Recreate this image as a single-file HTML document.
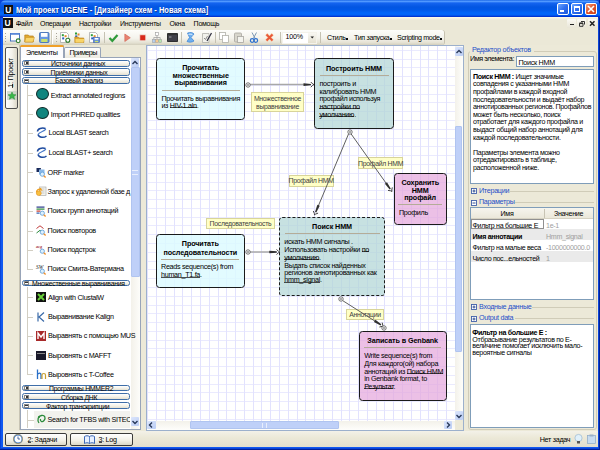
<!DOCTYPE html>
<html><head><meta charset="utf-8"><style>
*{box-sizing:border-box;margin:0;padding:0}
html,body{width:600px;height:450px;overflow:hidden;background:#00209A}
body{position:relative;font-family:"Liberation Sans",sans-serif;color:#000}
.a{position:absolute}
.t{position:absolute;white-space:nowrap;line-height:1}
u{text-decoration:none;background:linear-gradient(#222,#222) 0 calc(100% - 1.9px)/100% 0.8px no-repeat}
svg{position:absolute;overflow:visible}
</style></head><body>
<div class="a" style="left:0;top:0;width:600px;height:450px;background:#00209A"></div>
<div class="a" style="left:0;top:0;width:599px;height:449px;background:#0A44D8"></div>
<div class="a" style="left:1px;top:17px;width:597px;height:431px;background:#1058F0"></div>
<div class="a" style="left:0;top:0;width:600px;height:18px;border-radius:6px 6px 0 0;background:linear-gradient(#1E6AE8 0,#5098FF 1.5px,#1464F0 3px,#0256E2 7px,#0058E8 10px,#0066FA 13px,#0062F6 15px,#0034D2 16.5px,#0030C8 18px)"></div>
<div class="a" style="left:3px;top:17px;width:595px;height:430px;background:#ECE9D8"></div>
<div class="a" style="left:4px;top:5px;width:9px;height:9px;background:#111"></div>
<div class="t" style="left:5.3px;top:5.6px;color:#fff;font-weight:bold;font-size:8.4px">U</div>
<div class="t" style="left:16px;top:5.6px;color:#fff;font-weight:bold;font-size:8.8px;letter-spacing:0px;transform:scaleX(0.853);transform-origin:0 0;text-shadow:0.7px 0.7px 0 #0A2A90">Мой проект UGENE - [Дизайнер схем - Новая схема]</div>
<div class="a" style="left:557px;top:3px;width:12px;height:12px;border:1px solid #fff;border-radius:2px;background:linear-gradient(135deg,#70A8FF,#2F6FF0 50%,#1E58D8)"></div>
<div class="a" style="left:571px;top:3px;width:12px;height:12px;border:1px solid #fff;border-radius:2px;background:linear-gradient(135deg,#70A8FF,#2F6FF0 50%,#1E58D8)"></div>
<div class="a" style="left:560px;top:10px;width:4px;height:2px;background:#fff"></div>
<div class="a" style="left:574px;top:6px;width:6px;height:6px;border:1px solid #fff;border-top-width:2px"></div>
<div class="a" style="left:585px;top:3px;width:12px;height:12px;border:1px solid #fff;border-radius:2px;background:linear-gradient(135deg,#F4A080,#E0542A 50%,#C8401C)"></div>
<svg style="left:585px;top:3px" width="12" height="12"><path d="M3 3L9 9M9 3L3 9" stroke="#fff" stroke-width="1.6"/></svg>
<div class="a" style="left:3px;top:17px;width:595px;height:12px;background:linear-gradient(#FFFDE6 0,#F4F2E4 1.2px,#EBE8D7 3px,#EBE8D7)"></div>
<div class="a" style="left:3px;top:18px;width:10px;height:10px;background:#111"></div>
<div class="t" style="left:4.5px;top:18.8px;color:#fff;font-weight:bold;font-size:8.5px">U</div>
<div class="t" style="left:16.0px;top:19.7px;font-size:7.0px;letter-spacing:-0.25px;font-weight:normal;color:#000;"><u>Ф</u>айл</div>
<div class="t" style="left:40.0px;top:19.7px;font-size:7.0px;letter-spacing:-0.25px;font-weight:normal;color:#000;">Операции</div>
<div class="t" style="left:79.0px;top:19.7px;font-size:7.0px;letter-spacing:-0.25px;font-weight:normal;color:#000;">Настройки</div>
<div class="t" style="left:120.0px;top:19.7px;font-size:7.0px;letter-spacing:-0.25px;font-weight:normal;color:#000;">Инструменты</div>
<div class="t" style="left:169.6px;top:19.7px;font-size:7.0px;letter-spacing:-0.25px;font-weight:normal;color:#000;">Окна</div>
<div class="t" style="left:193.6px;top:19.7px;font-size:7.0px;letter-spacing:-0.25px;font-weight:normal;color:#000;">Помощь</div>
<div class="a" style="left:567px;top:19px;width:8.5px;height:8.7px;background:linear-gradient(#FBFAF5,#E8E5D6);border-radius:1px"></div>
<div class="a" style="left:577.3px;top:19px;width:8.5px;height:8.7px;background:linear-gradient(#FBFAF5,#E8E5D6);border-radius:1px"></div>
<div class="a" style="left:588px;top:19px;width:8.5px;height:8.7px;background:linear-gradient(#FBFAF5,#E8E5D6);border-radius:1px"></div>
<div class="a" style="left:569.5px;top:23.5px;width:4px;height:1.6px;background:#222"></div>
<svg style="left:578px;top:19px" width="8" height="9"><path d="M3 2.5h3.5v3M1.5 4.3h3.5v3h-3.5z" stroke="#333" fill="none" stroke-width="1"/><path d="M1.5 4.3h3.5" stroke="#333" stroke-width="1.6"/></svg>
<svg style="left:588px;top:19px" width="8.5" height="9"><path d="M2 2.3L6.5 6.8M6.5 2.3L2 6.8" stroke="#222" stroke-width="1.5"/></svg>
<div class="a" style="left:3px;top:29px;width:595px;height:16px;background:#EBE8D7"></div>
<div class="a" style="left:3px;top:29.5px;width:441px;height:15px;border-radius:0 3px 3px 0;background:linear-gradient(#FDFDFA,#F4F3EC 55%,#E4E1D2 85%,#D2CEBC);box-shadow:1px 0 0 #C6C2B0"></div>
<div class="a" style="left:5px;top:33px;width:1px;height:1px;background:#A8A498"></div>
<div class="a" style="left:5px;top:35.5px;width:1px;height:1px;background:#A8A498"></div>
<div class="a" style="left:5px;top:38px;width:1px;height:1px;background:#A8A498"></div>
<div class="a" style="left:5px;top:40.5px;width:1px;height:1px;background:#A8A498"></div>
<div class="a" style="left:55.5px;top:33px;width:1px;height:1px;background:#A8A498"></div>
<div class="a" style="left:55.5px;top:35.5px;width:1px;height:1px;background:#A8A498"></div>
<div class="a" style="left:55.5px;top:38px;width:1px;height:1px;background:#A8A498"></div>
<div class="a" style="left:55.5px;top:40.5px;width:1px;height:1px;background:#A8A498"></div>
<div class="a" style="left:51px;top:30px;width:1px;height:14px;background:#D0CCBA"></div>
<div class="a" style="left:52px;top:30px;width:1px;height:14px;background:#FFFFFF"></div>
<div class="a" style="left:104px;top:32px;width:1px;height:11px;background:#C5C2B2"></div>
<div class="a" style="left:181px;top:32px;width:1px;height:11px;background:#C5C2B2"></div>
<div class="a" style="left:215px;top:32px;width:1px;height:11px;background:#C5C2B2"></div>
<div class="a" style="left:280px;top:32px;width:1px;height:11px;background:#C5C2B2"></div>
<div class="a" style="left:320px;top:32px;width:1px;height:11px;background:#C5C2B2"></div>
<svg style="left:10px;top:32px" width="11" height="11"><rect x="0.5" y="1.5" width="9" height="7.5" fill="#fff" stroke="#3A68B8" stroke-width="0.9"/><rect x="0.5" y="1" width="9" height="1.8" fill="#5A88D8"/><circle cx="8.2" cy="8.8" r="1.9" fill="#fff" stroke="#2A7A2A" stroke-width="1.1"/></svg>
<svg style="left:24px;top:32px" width="11" height="11"><path d="M0.8 3h3.5l1 1h4v6h-8.5z" fill="#E0A830" stroke="#B88018" stroke-width="0.7"/><path d="M1.8 5.5h8.7l-1.6 4.5h-8.1z" fill="#F8D468" stroke="#C89020" stroke-width="0.5"/></svg>
<svg style="left:39px;top:32px" width="11" height="11"><rect x="0.5" y="0.5" width="9.5" height="10" rx="1" fill="#6A98E0" stroke="#3A68B0" stroke-width="0.8"/><rect x="2" y="1" width="6.5" height="3.8" fill="#fff"/><rect x="2.2" y="7" width="6.2" height="3" fill="#C8E070"/></svg>
<svg style="left:60px;top:32px" width="11" height="11"><path d="M0.5 0.5h6l2 2v8h-8z" fill="#fff" stroke="#A0A0A0" stroke-width="0.7"/><rect x="1.8" y="2.2" width="2" height="2" fill="#2A9A3A"/><rect x="4.6" y="3.2" width="2" height="2" fill="#E08A2A"/><rect x="2.2" y="5.4" width="2" height="2" fill="#2A5AC0"/><circle cx="7.8" cy="8.2" r="2" fill="#fff" stroke="#2A7A2A" stroke-width="1.1"/></svg>
<svg style="left:74px;top:32px" width="11" height="11"><rect x="1" y="0.5" width="2" height="2" fill="#2A9A3A"/><rect x="3.5" y="1.5" width="2" height="2" fill="#E08A2A"/><rect x="1.2" y="3.4" width="2" height="2" fill="#2A5AC0"/><path d="M0.8 5h3.5l1 1h4.5v4.5h-9z" fill="#E0A830" stroke="#B88018" stroke-width="0.6"/><path d="M1.5 7h9l-1.3 3.5h-7.7z" fill="#F8D468"/></svg>
<svg style="left:89px;top:32px" width="11" height="11"><path d="M0.5 0.5h6l2 2v8h-8z" fill="#fff" stroke="#A0A0A0" stroke-width="0.7"/><rect x="1.8" y="2.2" width="2" height="2" fill="#2A9A3A"/><rect x="4.6" y="3.2" width="2" height="2" fill="#E08A2A"/><rect x="2.2" y="5.4" width="2" height="2" fill="#2A5AC0"/><rect x="4.5" y="5.5" width="6" height="5" fill="#5A8AE0" stroke="#3A60B0" stroke-width="0.6"/><rect x="5.6" y="6" width="3.8" height="1.6" fill="#fff"/><rect x="5.8" y="8.8" width="3.4" height="1.4" fill="#C8E070"/></svg>
<svg style="left:108px;top:33px" width="11" height="10"><path d="M1.5 5L4.3 7.8 9.5 2" stroke="#2E9A3A" stroke-width="2.2" fill="none"/></svg>
<svg style="left:124px;top:33px" width="8" height="10"><path d="M0.8 1v7.5l5.5-3.75z" fill="#E88270" stroke="#D06050" stroke-width="0.6"/></svg>
<svg style="left:139px;top:34px" width="8" height="8"><rect x="0.8" y="0.8" width="6" height="6" fill="#D8281A" stroke="#F0E8E0" stroke-width="0.8"/></svg>
<svg style="left:152px;top:32px" width="10" height="11"><rect x="3.5" y="0.5" width="3" height="3" fill="#fff" stroke="#999" stroke-width="0.6"/><path d="M5 3.5v2M1.8 7.5v-2h6.4v2M5 5.5v2" stroke="#999" fill="none" stroke-width="0.7"/><rect x="0.3" y="7.5" width="2.8" height="3" fill="#B8D0F0" stroke="#999" stroke-width="0.5"/><rect x="3.6" y="7.5" width="2.8" height="3" fill="#F4C890" stroke="#999" stroke-width="0.5"/><rect x="6.9" y="7.5" width="2.8" height="3" fill="#B8E8B0" stroke="#999" stroke-width="0.5"/></svg>
<svg style="left:167px;top:33px" width="11" height="9"><rect x="0" y="0" width="11" height="9" rx="0.8" fill="#303030"/><rect x="1" y="2" width="9" height="6" fill="#404048"/><path d="M2 4h2.5" stroke="#bbb" stroke-width="0.8"/></svg>
<svg style="left:186px;top:32px" width="9" height="11"><path d="M1.5 1C4 0 7 0.5 8 2L5 5.5 8 9C6 10.5 3 10.5 1 9.5L3.5 5.5z" fill="#6FB0F0" stroke="#3A80D0" stroke-width="0.7"/><path d="M2.5 2.5C4 2 6 2 6.5 3" stroke="#fff" stroke-width="0.8" fill="none"/></svg>
<svg style="left:202px;top:32px" width="10" height="11"><path d="M0.5 1.5h6.5v9h-6.5z" fill="#F2F2EC" stroke="#A8A8A0" stroke-width="0.7"/><path d="M2 6l1.5 1.5L5.5 4" stroke="#808080" stroke-width="0.9" fill="none"/><path d="M9.5 1L5 9" stroke="#303040" stroke-width="1.3"/></svg>
<svg style="left:219px;top:32px" width="10" height="11"><rect x="0.5" y="0.5" width="6" height="7" fill="#fff" stroke="#B0B0A8" stroke-width="0.8"/><rect x="3.5" y="3.5" width="6" height="7" fill="#fff" stroke="#B0B0A8" stroke-width="0.8"/></svg>
<svg style="left:234px;top:32px" width="10" height="11"><rect x="0.5" y="1" width="7" height="9" rx="1" fill="#D8D6CC" stroke="#A8A6A0" stroke-width="0.8"/><rect x="3.5" y="4.5" width="6" height="6" fill="#F4F4EE" stroke="#A8A6A0" stroke-width="0.8"/></svg>
<svg style="left:250px;top:32px" width="8" height="11"><path d="M2 0.5L5 6.2M6.5 0.5L3.5 6.2" stroke="#7090B0" stroke-width="0.9"/><circle cx="2.2" cy="8.5" r="1.8" fill="none" stroke="#2A70D0" stroke-width="1.2"/><circle cx="5.8" cy="8.5" r="1.8" fill="none" stroke="#2A70D0" stroke-width="1.2"/></svg>
<svg style="left:265px;top:33px" width="9" height="9"><path d="M1.2 1.2L7.8 7.8M7.8 1.2L1.2 7.8" stroke="#F8D0B0" stroke-width="3.2"/><path d="M1.5 1.5L7.5 7.5M7.5 1.5L1.5 7.5" stroke="#E85838" stroke-width="1.8"/></svg>
<div class="a" style="left:282px;top:32px;width:35px;height:12px;background:#fff;border:1px solid #F4F2EA"></div>
<div class="a" style="left:308px;top:33px;width:8px;height:10px;background:linear-gradient(#F8F7F2,#E4E0D0)"></div>
<svg style="left:310px;top:36px" width="5" height="3"><path d="M0.5 0.5h3.5l-1.75 2z" fill="#222"/></svg>
<div class="t" style="left:285.5px;top:34.4px;font-size:7.1px;letter-spacing:-0.2px;font-weight:normal;color:#000;">100%</div>
<div class="t" style="left:327.0px;top:34.6px;font-size:7.1px;letter-spacing:-0.3px;font-weight:normal;color:#000;">Стиль<i style="display:inline-block;width:2.2px;height:2px;background:#111;margin-left:0.4px;vertical-align:0px"></i></div>
<div class="t" style="left:354.0px;top:34.6px;font-size:7.1px;letter-spacing:-0.33px;font-weight:normal;color:#000;">Тип запуска<i style="display:inline-block;width:2.2px;height:2px;background:#111;margin-left:0.4px;vertical-align:0px"></i></div>
<div class="t" style="left:397.0px;top:34.6px;font-size:7.1px;letter-spacing:-0.33px;font-weight:normal;color:#000;">Scripting mode<i style="display:inline-block;width:2.2px;height:2px;background:#111;margin-left:0.4px;vertical-align:0px"></i></div>
<div class="a" style="left:5px;top:47.4px;width:12.6px;height:62px;border:1px solid #505050;border-radius:2px;background:linear-gradient(90deg,#FFFFFF,#F4F2EA 55%,#DCD8C8)"></div>
<div class="t" style="left:-9px;top:69px;width:40px;text-align:center;font-size:7.5px;letter-spacing:-0.4px;transform:rotate(-90deg);transform-origin:20px 4px"><u>1</u>: Проект</div>
<svg style="left:6.5px;top:90.5px" width="10" height="9"><rect x="0" y="0" width="10" height="9" fill="#B8C8B8" opacity="0.6"/><path d="M5 1L6.2 3.6 9 3.8 6.9 5.6 7.6 8.3 5 6.8 2.4 8.3 3.1 5.6 1 3.8 3.8 3.6z" fill="#3AB84A" stroke="#2A8A3A" stroke-width="0.5"/></svg>
<div class="a" style="left:19px;top:45px;width:1px;height:385px;background:#C8C4B4"></div>
<div class="a" style="left:20px;top:57px;width:121px;height:373px;border:1px solid #98A4B8;background:#FCFCFE"></div>
<div class="a" style="left:64px;top:47px;width:37px;height:11px;border:1px solid #98A4B8;border-bottom:0;border-radius:2px 2px 0 0;background:linear-gradient(#FFFFFF,#ECEAE0)"></div>
<div class="a" style="left:20px;top:45px;width:44px;height:13px;border:1px solid #98A4B8;border-bottom:0;border-radius:2px 2px 0 0;background:#FCFCFE"></div>
<div class="a" style="left:20px;top:45px;width:44px;height:2px;background:#F0A028;border-radius:2px 2px 0 0"></div>
<div class="t" style="left:26.0px;top:48.6px;font-size:7.2px;letter-spacing:-0.38px;font-weight:normal;color:#000;">Элементы</div>
<div class="t" style="left:69.4px;top:49.2px;font-size:7.2px;letter-spacing:-0.55px;font-weight:normal;color:#000;">Примеры</div>
<div class="a" style="left:21px;top:58px;width:110px;height:371px;background:#fff"></div>
<div class="a" style="left:131px;top:58px;width:9px;height:371px;background:linear-gradient(90deg,#F3F1EA,#FDFDFA)"></div>
<div class="a" style="left:131px;top:67px;width:8.5px;height:210px;background:#BFD0F8;border:1px solid #B0C4F0;border-radius:1px"></div>
<div class="a" style="left:132px;top:170px;width:6px;height:5px;border-top:1px solid #E8EEFC;border-bottom:1px solid #E8EEFC"></div>
<div class="a" style="left:131px;top:58px;width:8px;height:9px;background:linear-gradient(135deg,#DCE6FC,#BACCF4);border-radius:1px"></div>
<svg style="left:131px;top:58.5px" width="8" height="8"><path d="M1.5 5L4 2.5 6.5 5" stroke="#2A3A5A" stroke-width="1.4" fill="none"/></svg>
<div class="a" style="left:131px;top:417px;width:8px;height:9px;background:linear-gradient(135deg,#DCE6FC,#BACCF4);border-radius:1px"></div>
<svg style="left:131px;top:417.5px" width="8" height="8"><path d="M1.5 3L4 5.5 6.5 3" stroke="#2A3A5A" stroke-width="1.4" fill="none"/></svg>
<div class="a" style="left:21.6px;top:59.6px;width:108px;height:6.999999999999993px;border:1px solid #3F6EA8;border-radius:2.5px;background:linear-gradient(#FFFFFF,#F2F0E6 60%,#E4E0D2)"></div>
<div class="a" style="left:24px;top:61.1px;width:5px;height:3.999999999999993px;border:0.5px solid #888;background:#fff"></div>
<div class="a" style="left:25.5px;top:62.099999999999994px;width:2px;height:2px;background:#333"></div>
<div class="t" style="left:51.0px;top:61.0px;font-size:6.9px;letter-spacing:-0.3px;font-weight:normal;color:#000;">Источники данных</div>
<div class="a" style="left:21.6px;top:68.4px;width:108px;height:7.199999999999989px;border:1px solid #3F6EA8;border-radius:2.5px;background:linear-gradient(#FFFFFF,#F2F0E6 60%,#E4E0D2)"></div>
<div class="a" style="left:24px;top:69.9px;width:5px;height:4.199999999999989px;border:0.5px solid #888;background:#fff"></div>
<div class="a" style="left:25.5px;top:71.0px;width:2px;height:2px;background:#333"></div>
<div class="t" style="left:50.6px;top:69.9px;font-size:6.9px;letter-spacing:-0.3px;font-weight:normal;color:#000;">Приёмники данных</div>
<div class="a" style="left:21.6px;top:77px;width:108px;height:7px;border:1px solid #3F6EA8;border-radius:2.5px;background:linear-gradient(#FFFFFF,#F2F0E6 60%,#E4E0D2)"></div>
<div class="a" style="left:24px;top:78.5px;width:5px;height:4px;border:0.5px solid #888;background:#fff"></div>
<div class="a" style="left:25px;top:80.0px;width:3px;height:1px;background:#333"></div>
<div class="t" style="left:55.0px;top:78.4px;font-size:6.9px;letter-spacing:-0.3px;font-weight:normal;color:#000;">Базовый анализ</div>
<div class="a" style="left:21.6px;top:279.6px;width:108px;height:6.599999999999966px;border:1px solid #3F6EA8;border-radius:2.5px;background:linear-gradient(#FFFFFF,#F2F0E6 60%,#E4E0D2)"></div>
<div class="a" style="left:24px;top:281.1px;width:5px;height:3.599999999999966px;border:0.5px solid #888;background:#fff"></div>
<div class="a" style="left:25px;top:282.4px;width:3px;height:1px;background:#333"></div>
<div class="t" style="left:32.0px;top:280.8px;font-size:6.9px;letter-spacing:-0.3px;font-weight:normal;color:#000;">Множественные выравнивания</div>
<div class="a" style="left:21.6px;top:384.6px;width:108px;height:6.7999999999999545px;border:1px solid #3F6EA8;border-radius:2.5px;background:linear-gradient(#FFFFFF,#F2F0E6 60%,#E4E0D2)"></div>
<div class="a" style="left:24px;top:386.1px;width:5px;height:3.7999999999999545px;border:0.5px solid #888;background:#fff"></div>
<div class="a" style="left:25.5px;top:387.0px;width:2px;height:2px;background:#333"></div>
<div class="t" style="left:49.0px;top:385.9px;font-size:6.9px;letter-spacing:-0.3px;font-weight:normal;color:#000;">Программы HMMER2</div>
<div class="a" style="left:21.6px;top:393.4px;width:108px;height:6.800000000000011px;border:1px solid #3F6EA8;border-radius:2.5px;background:linear-gradient(#FFFFFF,#F2F0E6 60%,#E4E0D2)"></div>
<div class="a" style="left:24px;top:394.9px;width:5px;height:3.8000000000000114px;border:0.5px solid #888;background:#fff"></div>
<div class="a" style="left:25.5px;top:395.79999999999995px;width:2px;height:2px;background:#333"></div>
<div class="t" style="left:61.0px;top:394.7px;font-size:6.9px;letter-spacing:-0.3px;font-weight:normal;color:#000;">Сборка ДНК</div>
<div class="a" style="left:21.6px;top:402.4px;width:108px;height:6.800000000000011px;border:1px solid #3F6EA8;border-radius:2.5px;background:linear-gradient(#FFFFFF,#F2F0E6 60%,#E4E0D2)"></div>
<div class="a" style="left:24px;top:403.9px;width:5px;height:3.8000000000000114px;border:0.5px solid #888;background:#fff"></div>
<div class="a" style="left:25px;top:405.29999999999995px;width:3px;height:1px;background:#333"></div>
<div class="t" style="left:46.0px;top:403.7px;font-size:6.9px;letter-spacing:-0.3px;font-weight:normal;color:#000;">Фактор транскрипции</div>
<div class="a" style="left:27px;top:85px;width:0;height:184px;border-left:1px solid #D2CEC2"></div>
<div class="a" style="left:27px;top:287px;width:0;height:88px;border-left:1px solid #D2CEC2"></div>
<div class="a" style="left:27px;top:410px;width:0;height:18px;border-left:1px solid #D2CEC2"></div>
<div class="a" style="left:27px;top:95.2px;width:6px;height:0;border-top:1px solid #D2CEC2"></div>
<div class="a" style="left:35.8px;top:88.4px;width:12.8px;height:11.8px;border-radius:50%;background:#10857F;border:1px solid #102A28"></div>
<div class="t" style="left:50.7px;top:91.6px;font-size:7.2px;letter-spacing:-0.3px;font-weight:normal;color:#000;">Extract annotated regions</div>
<div class="a" style="left:27px;top:114.2px;width:6px;height:0;border-top:1px solid #D2CEC2"></div>
<div class="a" style="left:35.8px;top:107.4px;width:12.8px;height:11.8px;border-radius:50%;background:#10857F;border:1px solid #102A28"></div>
<div class="t" style="left:50.7px;top:110.6px;font-size:7.2px;letter-spacing:-0.3px;font-weight:normal;color:#000;">Import PHRED qualities</div>
<div class="a" style="left:27px;top:133px;width:6px;height:0;border-top:1px solid #D2CEC2"></div>
<svg style="left:36px;top:127px" width="12" height="12"><path d="M1.5 4.5C1.5 1.5 6 0.5 9.5 1.5" stroke="#1E4A9E" stroke-width="1.5" fill="none"/><path d="M9.5 1.5C11 3.5 3 5 2 7.5" stroke="#4A7AC8" stroke-width="1.1" fill="none"/><path d="M2 7.5C3 11 8 11 10.5 9" stroke="#1E4A9E" stroke-width="1.5" fill="none"/></svg>
<div class="t" style="left:48.5px;top:129.4px;font-size:7.2px;letter-spacing:-0.3px;font-weight:normal;color:#000;">Local BLAST search</div>
<div class="a" style="left:27px;top:152.5px;width:6px;height:0;border-top:1px solid #D2CEC2"></div>
<svg style="left:36px;top:146.5px" width="12" height="12"><path d="M1.5 4.5C1.5 1.5 6 0.5 9.5 1.5" stroke="#1E4A9E" stroke-width="1.5" fill="none"/><path d="M9.5 1.5C11 3.5 3 5 2 7.5" stroke="#4A7AC8" stroke-width="1.1" fill="none"/><path d="M2 7.5C3 11 8 11 10.5 9" stroke="#1E4A9E" stroke-width="1.5" fill="none"/></svg>
<div class="t" style="left:48.5px;top:148.9px;font-size:7.2px;letter-spacing:-0.3px;font-weight:normal;color:#000;">Local BLAST+ search</div>
<div class="a" style="left:27px;top:172.3px;width:6px;height:0;border-top:1px solid #D2CEC2"></div>
<svg style="left:36px;top:166.8px" width="11" height="11"><path d="M0.5 1h4.5l-1 4h-3.5z" fill="#1A2A5A"/><rect x="3" y="2.5" width="5.5" height="5" fill="#8AB8E8"/><circle cx="6.3" cy="7.2" r="2.1" fill="#DDF0FC" stroke="#5A9AD8" stroke-width="0.8"/><path d="M7.8 8.7L9.6 10.5" stroke="#F0902A" stroke-width="1.3"/></svg>
<div class="t" style="left:47.6px;top:168.7px;font-size:7.2px;letter-spacing:-0.3px;font-weight:normal;color:#000;">ORF marker</div>
<div class="a" style="left:27px;top:191.5px;width:6px;height:0;border-top:1px solid #D2CEC2"></div>
<svg style="left:36px;top:186.0px" width="11" height="11"><rect x="3.5" y="1" width="6.5" height="8.5" fill="#F4F4EE" stroke="#A0A0A0" stroke-width="0.6"/><path d="M5 3h3.5M5 5h3.5M5 7h3.5" stroke="#B0B0B0" stroke-width="0.6"/><path d="M0.5 6.5C0.5 3.5 3 2.5 5 3.5L4.2 2M5 3.5L3.3 4.3" stroke="#F0A020" stroke-width="1.4" fill="none"/><circle cx="2.8" cy="7.2" r="2.4" fill="#F8C040" stroke="#E09020" stroke-width="0.6"/></svg>
<div class="t" style="left:47.6px;top:187.9px;font-size:7.2px;letter-spacing:-0.3px;font-weight:normal;color:#000;">Запрос к удаленной базе д</div>
<div class="a" style="left:27px;top:211px;width:6px;height:0;border-top:1px solid #D2CEC2"></div>
<svg style="left:36px;top:205.5px" width="11" height="11"><rect x="0.5" y="0.5" width="8" height="1.2" fill="#2A3A8A"/><rect x="0.5" y="2.5" width="8" height="1.2" fill="#2A8A3A"/><rect x="0.5" y="4.5" width="4" height="1.2" fill="#C83A2A"/><rect x="0.5" y="6.5" width="3" height="1.2" fill="#2A5AB0"/><circle cx="6.3" cy="7.2" r="2.1" fill="#DDF0FC" stroke="#5A9AD8" stroke-width="0.8"/><path d="M7.8 8.7L9.6 10.5" stroke="#F0902A" stroke-width="1.3"/></svg>
<div class="t" style="left:47.6px;top:207.4px;font-size:7.2px;letter-spacing:-0.3px;font-weight:normal;color:#000;">Поиск групп аннотаций</div>
<div class="a" style="left:27px;top:230.5px;width:6px;height:0;border-top:1px solid #D2CEC2"></div>
<svg style="left:36px;top:225.0px" width="11" height="11"><path d="M0.5 3.5L4 0.8 7.5 3.5" stroke="#C03A3A" fill="none" stroke-width="1"/><path d="M0.5 8L4 5.3 7.5 8" stroke="#2A8A3A" fill="none" stroke-width="1"/><circle cx="6.3" cy="7.2" r="2.1" fill="#DDF0FC" stroke="#5A9AD8" stroke-width="0.8"/><path d="M7.8 8.7L9.6 10.5" stroke="#F0902A" stroke-width="1.3"/></svg>
<div class="t" style="left:47.6px;top:226.9px;font-size:7.2px;letter-spacing:-0.3px;font-weight:normal;color:#000;">Поиск повторов</div>
<div class="a" style="left:27px;top:249.8px;width:6px;height:0;border-top:1px solid #D2CEC2"></div>
<svg style="left:36px;top:244.3px" width="11" height="11"><text x="0" y="4" font-size="4.2" font-family="Liberation Serif" font-style="italic" fill="#A03030" font-weight="bold">acg</text><circle cx="6.3" cy="7.2" r="2.1" fill="#DDF0FC" stroke="#5A9AD8" stroke-width="0.8"/><path d="M7.8 8.7L9.6 10.5" stroke="#F0902A" stroke-width="1.3"/></svg>
<div class="t" style="left:47.6px;top:246.2px;font-size:7.2px;letter-spacing:-0.3px;font-weight:normal;color:#000;">Поиск подстрок</div>
<div class="a" style="left:27px;top:269px;width:6px;height:0;border-top:1px solid #D2CEC2"></div>
<svg style="left:36px;top:263.5px" width="11" height="11"><text x="0" y="5" font-size="5.5" font-family="Liberation Serif" font-style="italic" fill="#222">SW</text><circle cx="6.3" cy="7.2" r="2.1" fill="#DDF0FC" stroke="#5A9AD8" stroke-width="0.8"/><path d="M7.8 8.7L9.6 10.5" stroke="#F0902A" stroke-width="1.3"/></svg>
<div class="t" style="left:47.6px;top:265.4px;font-size:7.2px;letter-spacing:-0.3px;font-weight:normal;color:#000;">Поиск Смита-Ватермана</div>
<div class="a" style="left:27px;top:297.4px;width:6px;height:0;border-top:1px solid #D2CEC2"></div>
<svg style="left:36px;top:292.4px" width="10" height="10"><rect width="10" height="10" fill="#111"/><path d="M2 2L8 8M8 2L2 8" stroke="#6AD03A" stroke-width="2"/></svg>
<div class="t" style="left:48.0px;top:293.8px;font-size:7.2px;letter-spacing:-0.3px;font-weight:normal;color:#000;">Align with ClustalW</div>
<div class="a" style="left:27px;top:316.6px;width:6px;height:0;border-top:1px solid #D2CEC2"></div>
<svg style="left:36px;top:311.6px" width="10" height="10"><path d="M2 0.5V9.5M8 0.5L3 5 8 9.5" stroke="#3A6AA8" stroke-width="1.2" fill="none"/></svg>
<div class="t" style="left:48.0px;top:313.0px;font-size:7.2px;letter-spacing:-0.3px;font-weight:normal;color:#000;">Выравнивание Kalign</div>
<div class="a" style="left:27px;top:336px;width:6px;height:0;border-top:1px solid #D2CEC2"></div>
<svg style="left:36px;top:331px" width="10" height="10"><rect width="10" height="10" fill="#A82A2A"/><path d="M2 8V2L5 6 8 2V8" stroke="#fff" stroke-width="1.4" fill="none"/></svg>
<div class="t" style="left:48.0px;top:332.4px;font-size:7.2px;letter-spacing:-0.3px;font-weight:normal;color:#000;">Выравнять с помощью MUS</div>
<div class="a" style="left:27px;top:355.4px;width:6px;height:0;border-top:1px solid #D2CEC2"></div>
<svg style="left:36px;top:350.9px" width="10" height="9"><rect width="10" height="9" fill="#1A1A2A"/><rect x="1" y="2" width="8" height="1" fill="#888"/></svg>
<div class="t" style="left:48.0px;top:351.8px;font-size:7.2px;letter-spacing:-0.3px;font-weight:normal;color:#000;">Выровнять с MAFFT</div>
<div class="a" style="left:27px;top:374.4px;width:6px;height:0;border-top:1px solid #D2CEC2"></div>
<svg style="left:36px;top:368.9px" width="11" height="11"><path d="M1.5 0.5V10M1.5 5.5C3 3.5 5 4 5 6V10" stroke="#2A70C8" stroke-width="1.3" fill="none"/><path d="M6 10V6C6 4 9.5 4 9.5 6V10" stroke="#C8A030" stroke-width="1.2" fill="none"/></svg>
<div class="t" style="left:48.0px;top:370.8px;font-size:7.2px;letter-spacing:-0.3px;font-weight:normal;color:#000;">Выровнять с T-Coffee</div>
<div class="a" style="left:34px;top:411px;width:96px;height:17px;background:#F2F2EE"></div>
<div class="a" style="left:27px;top:420px;width:7px;height:0;border-top:1px solid #D2CEC2"></div>
<svg style="left:36px;top:414px" width="11" height="11"><path d="M3 9C1 6 2 2 5.5 1.5S10 4 8 6.5 4 7 4.5 5" stroke="#2A8A3A" stroke-width="1.3" fill="none"/><circle cx="3" cy="3" r="1" fill="#2A8A3A"/></svg>
<div class="a" style="left:0;top:405px;width:130px;height:24px;overflow:hidden">
<div class="t" style="left:47.6px;top:10.77px;font-size:7.2px;letter-spacing:-0.3px">Search for TFBS with SITECO</div>
</div>
<div class="a" style="left:141px;top:45px;width:5px;height:386px;background:#ECE9D8"></div>
<div class="a" style="left:145.5px;top:45px;width:318px;height:386px;border:1px solid #9CB0CC;background:#fff"></div>
<svg style="left:147px;top:46px;overflow:hidden" width="308" height="374.5"><path d="M0 4.50H316M0 13.50H316M0 21.50H316M0 30.50H316M0 39.50H316M0 48.50H316M0 56.50H316M0 65.50H316M0 74.50H316M0 83.50H316M0 92.50H316M0 100.50H316M0 109.50H316M0 118.50H316M0 127.50H316M0 136.50H316M0 144.50H316M0 153.50H316M0 162.50H316M0 171.50H316M0 179.50H316M0 188.50H316M0 197.50H316M0 206.50H316M0 215.50H316M0 223.50H316M0 232.50H316M0 241.50H316M0 250.50H316M0 259.50H316M0 267.50H316M0 276.50H316M0 285.50H316M0 294.50H316M0 302.50H316M0 311.50H316M0 320.50H316M0 329.50H316M0 338.50H316M0 346.50H316M0 355.50H316M0 364.50H316M0 373.50H316M0 382.50H316" stroke="#EAEAFE" stroke-width="1"/><path d="M0.50 0V384M9.50 0V384M18.50 0V384M27.50 0V384M35.50 0V384M44.50 0V384M53.50 0V384M62.50 0V384M71.50 0V384M79.50 0V384M88.50 0V384M97.50 0V384M106.50 0V384M114.50 0V384M123.50 0V384M132.50 0V384M141.50 0V384M150.50 0V384M158.50 0V384M167.50 0V384M176.50 0V384M185.50 0V384M194.50 0V384M202.50 0V384M211.50 0V384M220.50 0V384M229.50 0V384M237.50 0V384M246.50 0V384M255.50 0V384M264.50 0V384M273.50 0V384M281.50 0V384M290.50 0V384M299.50 0V384M308.50 0V384" stroke="#E2E2FE" stroke-width="1"/></svg>
<div class="a" style="left:454.5px;top:46px;width:8px;height:374px;background:linear-gradient(90deg,#F3F1EA,#FEFEFB)"></div>
<div class="a" style="left:455px;top:126px;width:7px;height:225.7px;background:#BFD0F8;border:1px solid #B0C4F0;border-radius:1px"></div>
<div class="a" style="left:454.5px;top:47px;width:8px;height:8.5px;background:linear-gradient(135deg,#DCE6FC,#BACCF4);border-radius:1px"></div>
<svg style="left:454.5px;top:47.5px" width="8" height="8"><path d="M1.5 5L4 2.5 6.5 5" stroke="#2A3A5A" stroke-width="1.4" fill="none"/></svg>
<div class="a" style="left:454.5px;top:411px;width:8px;height:8.5px;background:linear-gradient(135deg,#DCE6FC,#BACCF4);border-radius:1px"></div>
<svg style="left:454.5px;top:411.5px" width="8" height="8"><path d="M1.5 3L4 5.5 6.5 3" stroke="#2A3A5A" stroke-width="1.4" fill="none"/></svg>
<div class="a" style="left:146.5px;top:420.5px;width:308px;height:9.5px;background:linear-gradient(#F3F1EA,#FEFEFB)"></div>
<div class="a" style="left:190px;top:420.7px;width:149px;height:8.8px;background:#BFD0F8;border:1px solid #B0C4F0;border-radius:1px"></div>
<div class="a" style="left:262px;top:422.5px;width:5px;height:5px;border-left:1px solid #E8EEFC;border-right:1px solid #E8EEFC"></div>
<div class="a" style="left:147px;top:420.7px;width:8.5px;height:8.8px;background:linear-gradient(135deg,#DCE6FC,#BACCF4);border-radius:1px"></div>
<svg style="left:147px;top:421.2px" width="8" height="8"><path d="M5 1.5L2.5 4 5 6.5" stroke="#2A3A5A" stroke-width="1.4" fill="none"/></svg>
<div class="a" style="left:444.3px;top:420.7px;width:8px;height:8.8px;background:linear-gradient(135deg,#DCE6FC,#BACCF4);border-radius:1px"></div>
<svg style="left:444.3px;top:421.2px" width="8" height="8"><path d="M3 1.5L5.5 4 3 6.5" stroke="#2A3A5A" stroke-width="1.4" fill="none"/></svg>
<div class="a" style="left:454.5px;top:420px;width:8px;height:10px;background:#ECE9D8"></div>
<div class="a" style="left:156.4px;top:58.3px;width:88.6px;height:62.0px;border:1.6px solid #1A1A1A;border-radius:3.5px;background:rgba(220,250,255,0.82)"></div>
<div class="t" style="left:100.7px;width:200px;text-align:center;top:64.1px;font-size:7.2px;letter-spacing:-0.1px;font-weight:bold;color:#000;">Прочитать</div>
<div class="t" style="left:100.7px;width:200px;text-align:center;top:71.7px;font-size:7.2px;letter-spacing:-0.1px;font-weight:bold;color:#000;">множественные</div>
<div class="t" style="left:100.7px;width:200px;text-align:center;top:79.4px;font-size:7.2px;letter-spacing:-0.1px;font-weight:bold;color:#000;">выравнивания</div>
<div class="a" style="left:162px;top:90px;width:78px;height:1px;background:#B4AC98"></div>
<div class="t" style="left:161.4px;top:94.8px;font-size:7.2px;letter-spacing:-0.3px;font-weight:normal;color:#000;">Прочитать выравнивания</div>
<div class="t" style="left:161.4px;top:102.0px;font-size:7.2px;letter-spacing:-0.3px;font-weight:normal;color:#000;">из <u>HIV-1.aln</u>.</div>
<div class="a" style="left:314.4px;top:58.4px;width:79.20000000000005px;height:70.19999999999999px;border:1.6px solid #1A1A1A;border-radius:3.5px;background:rgba(178,214,214,0.72)"></div>
<div class="t" style="left:254.0px;width:200px;text-align:center;top:64.7px;font-size:7.2px;letter-spacing:-0.1px;font-weight:bold;color:#000;">Построить НММ</div>
<div class="a" style="left:320px;top:75.4px;width:68.60000000000002px;height:1px;background:#B4AC98"></div>
<div class="t" style="left:319.4px;top:80.3px;font-size:7.2px;letter-spacing:-0.3px;font-weight:normal;color:#000;">построить и</div>
<div class="t" style="left:319.4px;top:87.7px;font-size:7.2px;letter-spacing:-0.3px;font-weight:normal;color:#000;">калибровать НММ</div>
<div class="t" style="left:319.4px;top:95.3px;font-size:7.2px;letter-spacing:-0.3px;font-weight:normal;color:#000;">профайл используя</div>
<div class="t" style="left:319.4px;top:102.9px;font-size:7.2px;letter-spacing:-0.3px;font-weight:normal;color:#000;"><u>настройки по </u></div>
<div class="t" style="left:319.4px;top:110.5px;font-size:7.2px;letter-spacing:-0.3px;font-weight:normal;color:#000;"><u>умолчанию</u>.</div>
<div class="a" style="left:393.6px;top:173px;width:53.19999999999999px;height:52px;border:1.6px solid #1A1A1A;border-radius:3.5px;background:rgba(228,168,220,0.72)"></div>
<div class="t" style="left:320.2px;width:200px;text-align:center;top:179.4px;font-size:7.2px;letter-spacing:-0.1px;font-weight:bold;color:#000;">Сохранить</div>
<div class="t" style="left:320.2px;width:200px;text-align:center;top:186.9px;font-size:7.2px;letter-spacing:-0.1px;font-weight:bold;color:#000;">НММ</div>
<div class="t" style="left:320.2px;width:200px;text-align:center;top:194.4px;font-size:7.2px;letter-spacing:-0.1px;font-weight:bold;color:#000;">профайл</div>
<div class="a" style="left:398px;top:204.3px;width:44px;height:1px;background:#B4AC98"></div>
<div class="t" style="left:399.0px;top:209.4px;font-size:7.2px;letter-spacing:-0.3px;font-weight:normal;color:#000;">Профиль</div>
<div class="a" style="left:279.4px;top:216.6px;width:106.0px;height:79.4px;border:1.6px dashed #1A1A1A;border-radius:3.5px;background:rgba(178,214,214,0.72)"></div>
<div class="t" style="left:232.0px;width:200px;text-align:center;top:222.7px;font-size:7.2px;letter-spacing:-0.1px;font-weight:bold;color:#000;">Поиск НММ</div>
<div class="a" style="left:285px;top:233.3px;width:95px;height:1px;background:#B4AC98"></div>
<div class="t" style="left:284.3px;top:237.7px;font-size:7.2px;letter-spacing:-0.3px;font-weight:normal;color:#000;">искать НММ сигналы .</div>
<div class="t" style="left:284.3px;top:246.0px;font-size:7.2px;letter-spacing:-0.3px;font-weight:normal;color:#000;">Использовать настройки <u>по </u></div>
<div class="t" style="left:284.3px;top:253.9px;font-size:7.2px;letter-spacing:-0.3px;font-weight:normal;color:#000;"><u>умолчанию</u>.</div>
<div class="t" style="left:284.3px;top:261.5px;font-size:7.2px;letter-spacing:-0.3px;font-weight:normal;color:#000;">Выдать список найденных</div>
<div class="t" style="left:284.3px;top:269.0px;font-size:7.2px;letter-spacing:-0.3px;font-weight:normal;color:#000;">регионов аннотированных как</div>
<div class="t" style="left:284.3px;top:276.3px;font-size:7.2px;letter-spacing:-0.3px;font-weight:normal;color:#000;"><u>hmm_signal</u>.</div>
<div class="a" style="left:156.2px;top:234px;width:89.20000000000002px;height:53.69999999999999px;border:1.6px solid #1A1A1A;border-radius:3.5px;background:rgba(220,250,255,0.82)"></div>
<div class="t" style="left:100.3px;width:200px;text-align:center;top:240.2px;font-size:7.2px;letter-spacing:-0.1px;font-weight:bold;color:#000;">Прочитать</div>
<div class="t" style="left:100.3px;width:200px;text-align:center;top:248.5px;font-size:7.2px;letter-spacing:-0.1px;font-weight:bold;color:#000;">последовательности</div>
<div class="a" style="left:161px;top:259px;width:78px;height:1px;background:#B4AC98"></div>
<div class="t" style="left:161.0px;top:263.2px;font-size:7.2px;letter-spacing:-0.3px;font-weight:normal;color:#000;">Reads sequence(s) from</div>
<div class="t" style="left:161.0px;top:271.3px;font-size:7.2px;letter-spacing:-0.3px;font-weight:normal;color:#000;"><u>human_T1.fa</u>.</div>
<div class="a" style="left:358.7px;top:331px;width:88.10000000000002px;height:70.30000000000001px;border:1.6px solid #1A1A1A;border-radius:3.5px;background:rgba(228,168,220,0.72)"></div>
<div class="t" style="left:302.7px;width:200px;text-align:center;top:337.3px;font-size:7.2px;letter-spacing:-0.1px;font-weight:bold;color:#000;">Записать в Genbank</div>
<div class="a" style="left:364px;top:347.2px;width:77px;height:1px;background:#B4AC98"></div>
<div class="t" style="left:364.2px;top:352.3px;font-size:7.2px;letter-spacing:-0.3px;font-weight:normal;color:#000;">Write sequence(s) from</div>
<div class="t" style="left:364.2px;top:360.2px;font-size:7.2px;letter-spacing:-0.3px;font-weight:normal;color:#000;">Для каждого(ой) набора</div>
<div class="t" style="left:364.2px;top:367.8px;font-size:7.2px;letter-spacing:-0.3px;font-weight:normal;color:#000;">аннотаций из <u>Поиск НММ</u></div>
<div class="t" style="left:364.2px;top:375.4px;font-size:7.2px;letter-spacing:-0.3px;font-weight:normal;color:#000;">in Genbank format, to</div>
<div class="t" style="left:364.2px;top:383.0px;font-size:7.2px;letter-spacing:-0.3px;font-weight:normal;color:#000;"><u>Результат</u>.</div>
<div class="a" style="left:251px;top:92.3px;width:53px;height:19.400000000000006px;background:#FFFFC6;border:1px solid #D8D49A"></div>
<div class="t" style="left:177.5px;width:200px;text-align:center;top:96.2px;font-size:6.9px;letter-spacing:-0.3px;font-weight:normal;color:#404040;">Множественное</div>
<div class="t" style="left:177.5px;width:200px;text-align:center;top:103.5px;font-size:6.9px;letter-spacing:-0.3px;font-weight:normal;color:#404040;">выравнивание</div>
<div class="a" style="left:357.6px;top:157.4px;width:45.89999999999998px;height:12.0px;background:#FFFFC6;border:1px solid #D8D49A"></div>
<div class="t" style="left:280.6px;width:200px;text-align:center;top:160.6px;font-size:6.9px;letter-spacing:-0.3px;font-weight:normal;color:#404040;">Профайл НММ</div>
<div class="a" style="left:288.5px;top:174.5px;width:45.10000000000002px;height:12.099999999999994px;background:#FFFFC6;border:1px solid #D8D49A"></div>
<div class="t" style="left:211.1px;width:200px;text-align:center;top:177.8px;font-size:6.9px;letter-spacing:-0.3px;font-weight:normal;color:#404040;">Профайл НММ</div>
<div class="a" style="left:206.4px;top:218.3px;width:68.20000000000002px;height:10.899999999999977px;background:#FFFFC6;border:1px solid #D8D49A"></div>
<div class="t" style="left:140.5px;width:200px;text-align:center;top:221.0px;font-size:6.9px;letter-spacing:-0.3px;font-weight:normal;color:#404040;">Последовательность</div>
<div class="a" style="left:346.2px;top:308.8px;width:37.60000000000002px;height:11.5px;background:#FFFFC6;border:1px solid #D8D49A"></div>
<div class="t" style="left:265.0px;width:200px;text-align:center;top:311.8px;font-size:6.9px;letter-spacing:-0.3px;font-weight:normal;color:#404040;">Аннотации</div>
<svg style="left:0;top:0" width="600" height="450"><path d="M250.0 84.6L305.0 84.6" stroke="#A8A8A8" stroke-width="1.5"/><path d="M303.50 85.90L311.00 85.30L311.00 83.90L303.50 83.30z" fill="#303030"/><path d="M310.8 87.2Q313.0 84.6 314.0 84.6Q313.0 84.6 310.8 82.0" stroke="#303030" fill="none" stroke-width="0.9"/><path d="M348.6 133.8L318.0 206.7" stroke="#606060" stroke-width="1.0"/><path d="M317.37 204.82L315.02 211.96L316.31 212.51L319.76 205.82z" fill="#303030"/><path d="M313.3 211.0Q314.9 214.1 314.5 215.0Q314.9 214.1 318.1 213.1" stroke="#303030" fill="none" stroke-width="0.9"/><path d="M350.8 133.5L386.8 184.2" stroke="#606060" stroke-width="1.0"/><path d="M384.86 183.69L389.69 189.46L390.83 188.65L386.98 182.19z" fill="#303030"/><path d="M388.0 190.4Q391.4 190.7 392.0 191.5Q391.4 190.7 392.3 187.4" stroke="#303030" fill="none" stroke-width="0.9"/><path d="M250.0 252.0L270.8 252.0" stroke="#A8A8A8" stroke-width="1.5"/><path d="M269.30 253.30L276.80 252.70L276.80 251.30L269.30 250.70z" fill="#303030"/><path d="M276.6 254.6Q278.8 252.0 279.8 252.0Q278.8 252.0 276.6 249.4" stroke="#303030" fill="none" stroke-width="0.9"/><path d="M342.5 300.5L375.9 321.7" stroke="#606060" stroke-width="1.0"/><path d="M373.94 321.97L380.59 325.48L381.34 324.30L375.33 319.78z" fill="#303030"/><path d="M379.4 327.0Q382.7 326.0 383.5 326.5Q382.7 326.0 382.2 322.6" stroke="#303030" fill="none" stroke-width="0.9"/></svg>
<svg style="left:245px;top:81.7px" width="6" height="6"><circle cx="3" cy="3" r="2.2" fill="#fff" stroke="#505050" stroke-width="0.8"/><circle cx="3" cy="3" r="0.8" fill="#404040"/></svg>
<svg style="left:346.6px;top:128.6px" width="6" height="6"><circle cx="3" cy="3" r="2.2" fill="#fff" stroke="#505050" stroke-width="0.8"/><circle cx="3" cy="3" r="0.8" fill="#404040"/></svg>
<svg style="left:337.7px;top:296.3px" width="6" height="6"><circle cx="3" cy="3" r="2.2" fill="#fff" stroke="#505050" stroke-width="0.8"/><circle cx="3" cy="3" r="0.8" fill="#404040"/></svg>
<svg style="left:245px;top:249px" width="6" height="6"><circle cx="3" cy="3" r="2.2" fill="#fff" stroke="#505050" stroke-width="0.8"/><circle cx="3" cy="3" r="0.8" fill="#404040"/></svg>
<svg style="left:381.4px;top:324.6px" width="6" height="6"><circle cx="3" cy="3" r="2.2" fill="#fff" stroke="#505050" stroke-width="0.8"/><circle cx="3" cy="3" r="0.8" fill="#404040"/></svg>
<div class="a" style="left:467.5px;top:50.5px;width:129px;height:379px;border:1px solid #D0CCB8;border-radius:3px"></div>
<div class="a" style="left:470px;top:46px;width:64px;height:8px;background:#ECE9D8"></div>
<div class="t" style="left:472.0px;top:46.0px;font-size:7.2px;letter-spacing:-0.28px;font-weight:normal;color:#1F4FC8;">Редактор объектов</div>
<div class="t" style="left:470.0px;top:55.4px;font-size:7.2px;letter-spacing:-0.45px;font-weight:normal;color:#000;">Имя элемента:</div>
<div class="a" style="left:516px;top:55.5px;width:78px;height:11.5px;border:1px solid #7F9DB9;background:#fff"></div>
<div class="t" style="left:518.5px;top:58.6px;font-size:7.2px;letter-spacing:-0.3px;font-weight:normal;color:#000;">Поиск НММ</div>
<div class="a" style="left:470px;top:69.3px;width:124px;height:114.5px;border:1px solid #7F9DB9;background:#fff"></div>
<div class="t" style="left:473.0px;top:73.8px;font-size:7.1px;letter-spacing:-0.33px;font-weight:normal;color:#000;"><b>Поиск НММ :</b> Ищет значимые</div>
<div class="t" style="left:473.0px;top:81.4px;font-size:7.1px;letter-spacing:-0.33px;font-weight:normal;color:#000;">совпадения с указанными НММ</div>
<div class="t" style="left:473.0px;top:88.9px;font-size:7.1px;letter-spacing:-0.33px;font-weight:normal;color:#000;">профайлами в каждой входной</div>
<div class="t" style="left:473.0px;top:96.5px;font-size:7.1px;letter-spacing:-0.33px;font-weight:normal;color:#000;">последовательности и выдаёт набор</div>
<div class="t" style="left:473.0px;top:104.1px;font-size:7.1px;letter-spacing:-0.33px;font-weight:normal;color:#000;">аннотированных регионов. Профайлов</div>
<div class="t" style="left:473.0px;top:111.7px;font-size:7.1px;letter-spacing:-0.33px;font-weight:normal;color:#000;">может быть несколько, поиск</div>
<div class="t" style="left:473.0px;top:119.3px;font-size:7.1px;letter-spacing:-0.33px;font-weight:normal;color:#000;">отработает для каждого профайла и</div>
<div class="t" style="left:473.0px;top:126.9px;font-size:7.1px;letter-spacing:-0.33px;font-weight:normal;color:#000;">выдаст общий набор аннотаций для</div>
<div class="t" style="left:473.0px;top:134.5px;font-size:7.1px;letter-spacing:-0.33px;font-weight:normal;color:#000;">каждой последовательности.</div>
<div class="t" style="left:473.0px;top:149.7px;font-size:7.1px;letter-spacing:-0.33px;font-weight:normal;color:#000;">Параметры элемента можно</div>
<div class="t" style="left:473.0px;top:157.3px;font-size:7.1px;letter-spacing:-0.33px;font-weight:normal;color:#000;">отредактировать в таблице,</div>
<div class="t" style="left:473.0px;top:164.9px;font-size:7.1px;letter-spacing:-0.33px;font-weight:normal;color:#000;">расположенной ниже.</div>
<svg style="left:470.5px;top:188.1px" width="6" height="6"><rect x="0.5" y="0.5" width="5" height="5" fill="#fff" stroke="#3F5FA8" stroke-width="0.9"/><path d="M1.5 3H4.5M3 1.5V4.5" stroke="#1F3F88" stroke-width="0.9"/></svg>
<div class="t" style="left:479.0px;top:186.6px;font-size:7.2px;letter-spacing:-0.3px;font-weight:normal;color:#1F4FC8;">Итерации</div>
<div class="a" style="left:510px;top:190.8px;width:84px;height:1px;background:#D0CCB8"></div>
<svg style="left:470.5px;top:199.7px" width="6" height="6"><rect x="0.5" y="0.5" width="5" height="5" fill="#fff" stroke="#3F5FA8" stroke-width="0.9"/><path d="M1.5 3H4.5" stroke="#1F3F88" stroke-width="0.9"/></svg>
<div class="t" style="left:479.0px;top:198.2px;font-size:7.2px;letter-spacing:-0.3px;font-weight:normal;color:#1F4FC8;">Параметры</div>
<div class="a" style="left:515px;top:202.4px;width:79px;height:1px;background:#D0CCB8"></div>
<div class="a" style="left:470px;top:207px;width:123.5px;height:92.5px;border:1px solid #7F9DB9;background:#fff"></div>
<div class="a" style="left:471px;top:208px;width:121.5px;height:10.6px;background:linear-gradient(#F6F5EE,#EBE8DA);border-bottom:1px solid #D6D2C2"></div>
<div class="a" style="left:543.6px;top:209px;width:1px;height:9px;background:#C8C4B4"></div>
<div class="t" style="left:407.0px;width:200px;text-align:center;top:210.6px;font-size:7.1px;letter-spacing:-0.28px;font-weight:normal;color:#000;">Имя</div>
<div class="t" style="left:554.0px;top:210.6px;font-size:7.1px;letter-spacing:-0.3px;font-weight:normal;color:#000;">Значение</div>
<div class="a" style="left:471px;top:229.4px;width:121.5px;height:10.8px;background:#EAEAEA"></div>
<div class="a" style="left:471px;top:251.2px;width:121.5px;height:10.6px;background:#EAEAEA"></div>
<div class="a" style="left:471px;top:219px;width:72.5px;height:10.4px;border:1px solid #909090;background:#fff"></div>
<div class="t" style="left:472.5px;top:222.5px;font-size:7.1px;letter-spacing:-0.32px;font-weight:normal;color:#000;">Фильтр на большие E</div>
<div class="t" style="left:546.0px;top:222.5px;font-size:7.1px;letter-spacing:-0.3px;font-weight:normal;color:#A0A0A0;">1e-1</div>
<div class="t" style="left:472.5px;top:233.5px;font-size:7.1px;letter-spacing:-0.32px;font-weight:bold;color:#000;">Имя аннотации</div>
<div class="t" style="left:546.0px;top:233.5px;font-size:7.1px;letter-spacing:-0.3px;font-weight:normal;color:#A0A0A0;">Hmm_signal</div>
<div class="t" style="left:472.5px;top:244.5px;font-size:7.1px;letter-spacing:-0.32px;font-weight:normal;color:#000;">Фильтр на малые веса</div>
<div class="t" style="left:546.0px;top:244.5px;font-size:7.1px;letter-spacing:-0.3px;font-weight:normal;color:#A0A0A0;">-1000000000.0</div>
<div class="t" style="left:472.5px;top:255.5px;font-size:7.1px;letter-spacing:-0.32px;font-weight:normal;color:#000;">Число пос...ельностей</div>
<div class="t" style="left:546.0px;top:255.5px;font-size:7.1px;letter-spacing:-0.3px;font-weight:normal;color:#A0A0A0;">1</div>
<svg style="left:470.5px;top:304.1px" width="6" height="6"><rect x="0.5" y="0.5" width="5" height="5" fill="#fff" stroke="#3F5FA8" stroke-width="0.9"/><path d="M1.5 3H4.5M3 1.5V4.5" stroke="#1F3F88" stroke-width="0.9"/></svg>
<div class="t" style="left:479.0px;top:302.6px;font-size:7.2px;letter-spacing:-0.3px;font-weight:normal;color:#1F4FC8;">Входные данные</div>
<div class="a" style="left:532px;top:306.8px;width:62px;height:1px;background:#D0CCB8"></div>
<svg style="left:470.5px;top:315.6px" width="6" height="6"><rect x="0.5" y="0.5" width="5" height="5" fill="#fff" stroke="#3F5FA8" stroke-width="0.9"/><path d="M1.5 3H4.5M3 1.5V4.5" stroke="#1F3F88" stroke-width="0.9"/></svg>
<div class="t" style="left:479.0px;top:314.1px;font-size:7.2px;letter-spacing:-0.3px;font-weight:normal;color:#1F4FC8;">Output data</div>
<div class="a" style="left:515px;top:318.3px;width:79px;height:1px;background:#D0CCB8"></div>
<div class="a" style="left:470px;top:324px;width:123.5px;height:104px;border:1px solid #7F9DB9;background:#fff"></div>
<div class="t" style="left:472.3px;top:329.5px;font-size:7.1px;letter-spacing:-0.32px;font-weight:normal;color:#000;"><b>Фильтр на большие E :</b></div>
<div class="t" style="left:472.3px;top:336.6px;font-size:7.1px;letter-spacing:-0.33px;font-weight:normal;color:#000;">Отбрасывание результатов по E-</div>
<div class="t" style="left:472.3px;top:343.3px;font-size:7.1px;letter-spacing:-0.33px;font-weight:normal;color:#000;">величине помогает исключить мало-</div>
<div class="t" style="left:472.3px;top:350.0px;font-size:7.1px;letter-spacing:-0.33px;font-weight:normal;color:#000;">вероятные сигналы</div>
<div class="a" style="left:3px;top:431px;width:595px;height:16px;background:linear-gradient(#F3F1E8,#ECE9D8 40%,#E2DECE)"></div>
<div class="a" style="left:4.7px;top:432.5px;width:62.0px;height:13.5px;border:1px solid #3A3A3A;border-radius:2px;background:linear-gradient(#FFFFFF,#F1EFE6 60%,#DCD8C8)"></div>
<div class="a" style="left:70px;top:432.5px;width:63px;height:13.5px;border:1px solid #3A3A3A;border-radius:2px;background:linear-gradient(#FFFFFF,#F1EFE6 60%,#DCD8C8)"></div>
<svg style="left:13px;top:434px" width="10" height="10"><circle cx="5" cy="5" r="4.2" fill="#fff" stroke="#3A7AD0" stroke-width="1.4"/><path d="M5 2.5V5H7" stroke="#3A5A9A" stroke-width="0.9" fill="none"/><circle cx="5" cy="5" r="4.6" fill="none" stroke="#E8A020" stroke-width="0.5"/></svg>
<div class="t" style="left:27.5px;top:436.3px;font-size:7.2px;letter-spacing:-0.3px;font-weight:normal;color:#000;"><u>2</u>: Задачи</div>
<svg style="left:84px;top:435px" width="11" height="9"><path d="M0.5 1.5C2 0.5 4 0.5 5.5 1.5 7 0.5 9 0.5 10.5 1.5V8.5C9 7.5 7 7.5 5.5 8.5 4 7.5 2 7.5 0.5 8.5z" fill="#E8F0FF" stroke="#2A5AB0" stroke-width="0.9"/><path d="M5.5 1.5V8.5" stroke="#2A5AB0" stroke-width="0.7"/></svg>
<div class="t" style="left:98.5px;top:436.3px;font-size:7.2px;letter-spacing:-0.3px;font-weight:normal;color:#000;"><u>3</u>: Log</div>
<div class="t" style="left:539.7px;top:436.3px;font-size:7.2px;letter-spacing:-0.3px;font-weight:normal;color:#000;">Нет задач</div>
<svg style="left:574px;top:434px" width="9" height="10"><circle cx="4.5" cy="4" r="3.6" fill="#E0F0FA" stroke="#9AB8D0" stroke-width="0.7"/><rect x="3" y="7" width="3" height="2.5" fill="#555"/></svg>
<svg style="left:587px;top:434px" width="9" height="10"><rect x="0.5" y="1.5" width="8" height="8" fill="#C8DCF0" stroke="#8AA8C8" stroke-width="0.7"/><rect x="2.5" y="0.5" width="4" height="2" fill="#9AB0C8"/></svg>
</body></html>
